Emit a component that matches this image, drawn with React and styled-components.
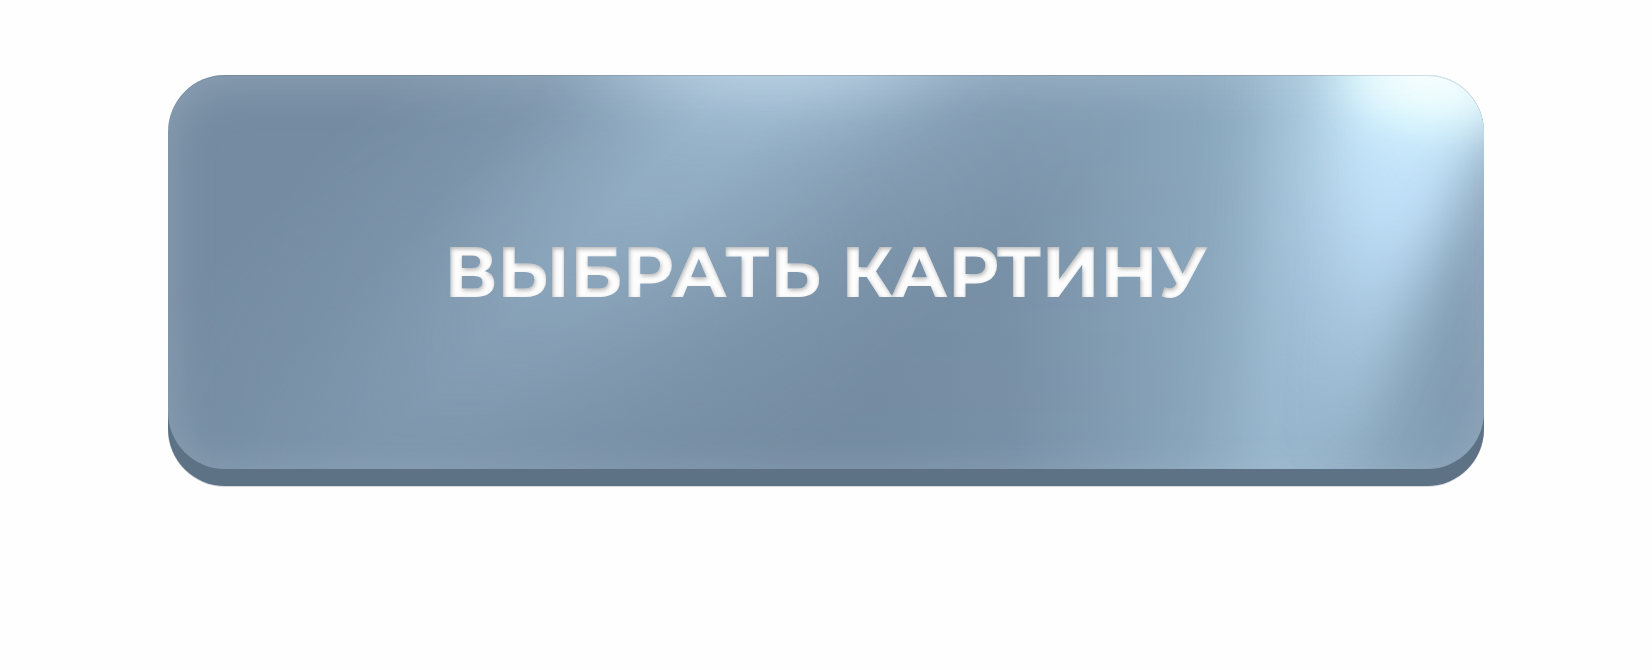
import styled, { createGlobalStyle } from "styled-components";

const GlobalStyle = createGlobalStyle`
  * {
    box-sizing: border-box;
  }

  body {
    margin: 0;
    background: #fefefe;
  }
`;

const Page = styled.main`
  display: grid;
  padding: 75px 168px;
`;

const Button = styled.button`
  position: relative;
  display: flex;
  align-items: center;
  justify-content: center;
  min-width: 0;
  padding: 157px 24px;
  border: none;
  border-radius: 57px;
  background: #748ba1;
  box-shadow: 0 17px 0 #5e7286, 0 18px 0 #d9dde3;
  color: #fdfdfd;
  font-family: "Montserrat", "Inter", sans-serif;
  font-size: 71px;
  font-weight: 700;
  line-height: 80px;
  cursor: pointer;

  /* soft light along the rim, above the sheen */
  &::after {
    content: "";
    position: absolute;
    inset: 0;
    border-radius: inherit;
    box-shadow: inset 0 1px 0 rgba(80, 95, 110, 0.2),
      inset 0 8px 48px rgba(225, 238, 250, 0.22);
    pointer-events: none;
  }
`;

const SheenDrawing = styled.svg`
  position: absolute;
  inset: 0;
  width: 100%;
  height: 100%;
  border-radius: inherit;
`;

const Label = styled.span`
  position: relative;
  filter: url(#label-inset);
`;

const FilterDefs = styled.svg`
  position: absolute;
  width: 0;
  height: 0;
`;

function Sheen() {
  return (
    <SheenDrawing
      viewBox="0 0 1317 394"
      preserveAspectRatio="none"
      aria-hidden="true"
    >
      <defs>
        <linearGradient id="left-fade" x1="0" y1="0" x2="0" y2="1">
          <stop offset="0" stopColor="#fff" />
          <stop offset="0.3" stopColor="#fff" stopOpacity="0.8" />
          <stop offset="0.7" stopColor="#fff" stopOpacity="0.46" />
          <stop offset="1" stopColor="#fff" stopOpacity="0.25" />
        </linearGradient>
        <mask id="left-mask">
          <rect width="1317" height="394" fill="url(#left-fade)" />
        </mask>
        <linearGradient
          id="left-band"
          gradientUnits="userSpaceOnUse"
          x1="180"
          y1="0"
          x2="980"
          y2="0"
          gradientTransform="translate(35 0) skewX(-44)"
        >
          <stop offset="0" stopColor="#b4d4ea" stopOpacity="0" />
          <stop offset="0.22" stopColor="#b4d4ea" stopOpacity="0.16" />
          <stop offset="0.36" stopColor="#b4d4ea" stopOpacity="0.42" />
          <stop offset="0.45" stopColor="#b4d4ea" stopOpacity="0.57" />
          <stop offset="0.53" stopColor="#b4d4ea" stopOpacity="0.58" />
          <stop offset="0.64" stopColor="#b4d4ea" stopOpacity="0.45" />
          <stop offset="0.78" stopColor="#b4d4ea" stopOpacity="0.26" />
          <stop offset="1" stopColor="#b4d4ea" stopOpacity="0.04" />
        </linearGradient>
        <linearGradient id="right-ramp" x1="0" y1="0" x2="1" y2="0">
          <stop offset="0.54" stopColor="#a4c6dc" stopOpacity="0" />
          <stop offset="0.64" stopColor="#a4c6dc" stopOpacity="0.08" />
          <stop offset="0.74" stopColor="#a4c6dc" stopOpacity="0.34" />
          <stop offset="0.84" stopColor="#a4c6dc" stopOpacity="0.56" />
          <stop offset="0.93" stopColor="#a4c6dc" stopOpacity="0.38" />
          <stop offset="1" stopColor="#a4c6dc" stopOpacity="0.22" />
        </linearGradient>
        <linearGradient id="right-fade" x1="0" y1="0" x2="0" y2="1">
          <stop offset="0" stopColor="#d0f2ff" />
          <stop offset="0.4" stopColor="#c6e7ff" stopOpacity="0.95" />
          <stop offset="0.65" stopColor="#b8daf2" stopOpacity="0.6" />
          <stop offset="1" stopColor="#b0d0e8" stopOpacity="0.24" />
        </linearGradient>
        <filter
          id="blur-wide"
          filterUnits="userSpaceOnUse"
          x="-200"
          y="-200"
          width="1720"
          height="800"
        >
          <feGaussianBlur stdDeviation="42" />
        </filter>
        <filter
          id="blur-tight"
          filterUnits="userSpaceOnUse"
          x="-200"
          y="-200"
          width="1720"
          height="800"
        >
          <feGaussianBlur stdDeviation="25" />
        </filter>
      </defs>
      <rect
        width="1317"
        height="394"
        fill="url(#left-band)"
        mask="url(#left-mask)"
      />
      <rect width="1317" height="394" fill="url(#right-ramp)" />
      <path
        d="M1130 -60 L1340 -60 L1310 60 L1250 220 L1150 460 L1050 460 L1110 200 Z"
        fill="url(#right-fade)"
        opacity="0.75"
        filter="url(#blur-wide)"
      />
      <path
        d="M1175 -60 L1390 -60 L1300 90 L1235 240 L1180 380 L1160 380 L1185 140 Z"
        fill="url(#right-fade)"
        opacity="0.8"
        filter="url(#blur-tight)"
      />
      <ellipse
        cx="1268"
        cy="0"
        rx="84"
        ry="50"
        fill="#e6ffff"
        filter="url(#blur-tight)"
      />
      <ellipse
        cx="1270"
        cy="-20"
        rx="60"
        ry="40"
        fill="#fff"
        filter="url(#blur-tight)"
      />
      <ellipse
        cx="600"
        cy="-30"
        rx="160"
        ry="50"
        fill="#c2daee"
        opacity="0.7"
        filter="url(#blur-wide)"
      />
    </SheenDrawing>
  );
}

function LabelInsetFilter() {
  return (
    <FilterDefs aria-hidden="true">
      <filter id="label-inset" colorInterpolationFilters="sRGB">
        <feComponentTransfer in="SourceAlpha" result="outside">
          <feFuncA type="table" tableValues="1 0" />
        </feComponentTransfer>
        <feGaussianBlur in="outside" stdDeviation="2" />
        <feOffset dx="1" dy="2" result="shade" />
        <feFlood floodColor="#4a4a4a" floodOpacity="0.4" />
        <feComposite in2="shade" operator="in" />
        <feComposite in2="SourceAlpha" operator="in" result="inner" />
        <feMerge>
          <feMergeNode in="SourceGraphic" />
          <feMergeNode in="inner" />
        </feMerge>
      </filter>
    </FilterDefs>
  );
}

function App() {
  return (
    <Page>
      <GlobalStyle />
      <LabelInsetFilter />
      <Button type="button">
        <Sheen />
        <Label>ВЫБРАТЬ КАРТИНУ</Label>
      </Button>
    </Page>
  );
}

export default App;
